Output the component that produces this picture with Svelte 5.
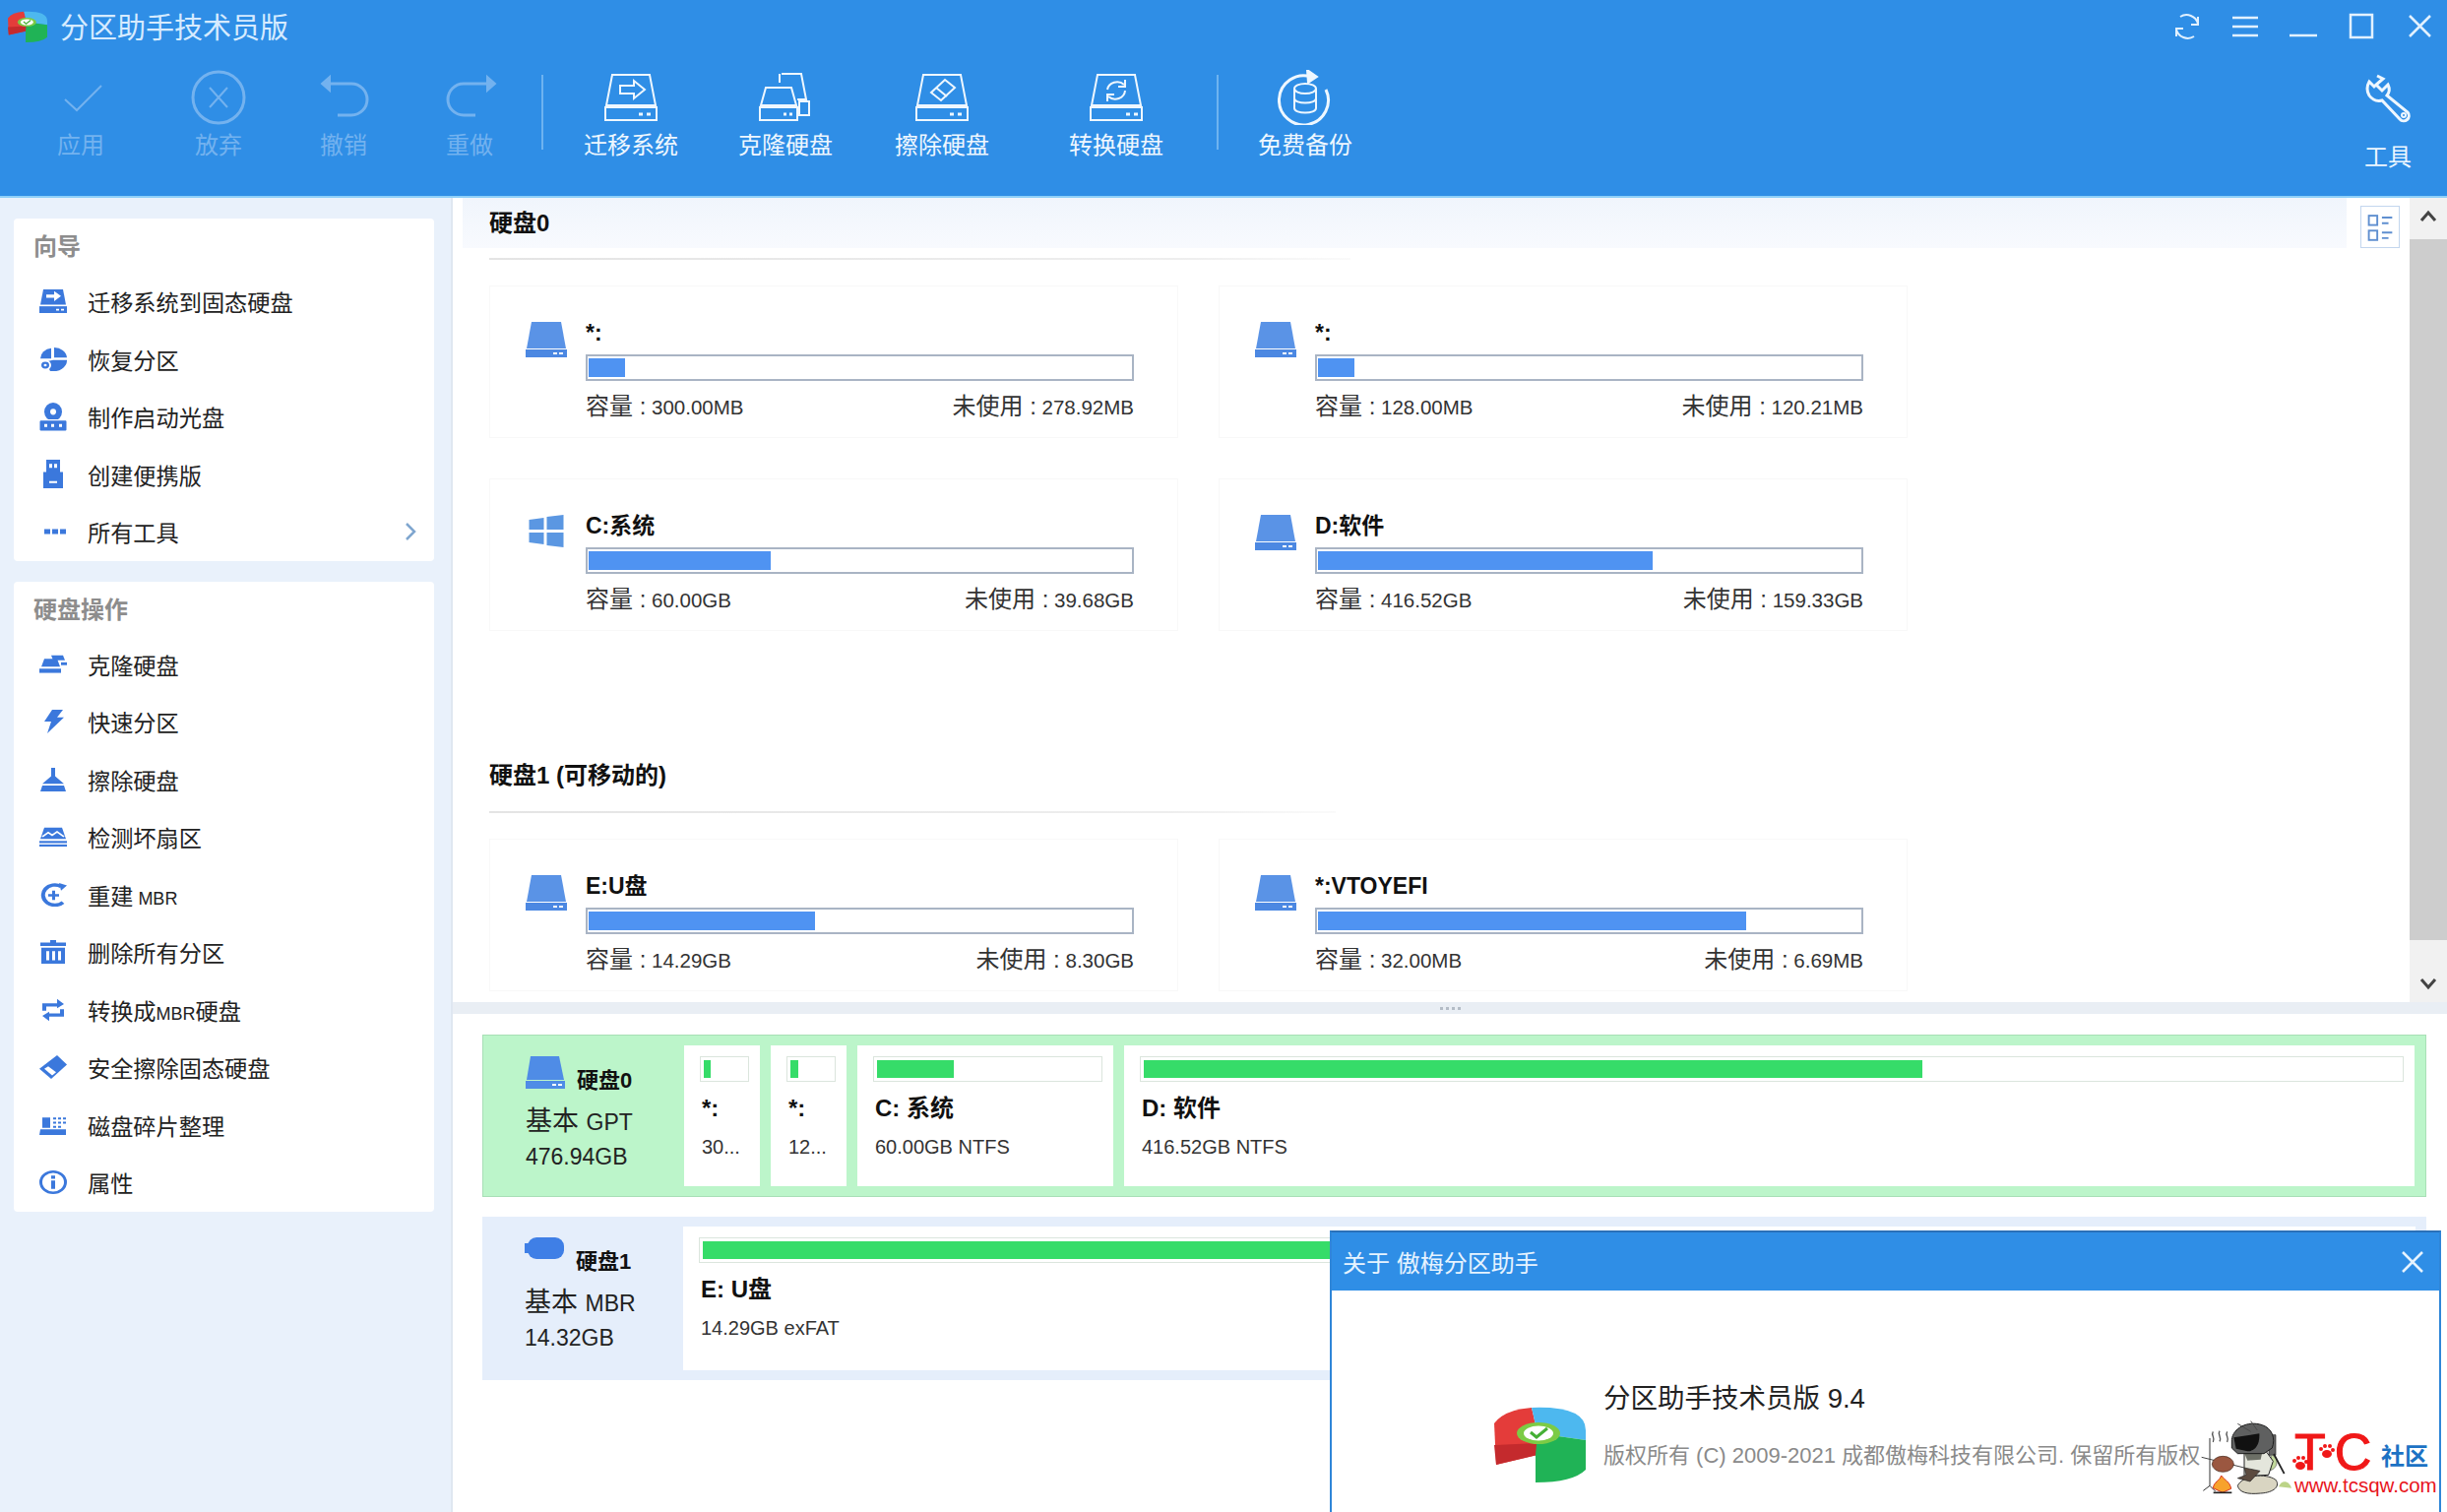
<script>
	const leftTools = [
		{ id: 'check', label: '应用', off: true, gap: 0 },
		{ id: 'cancel', label: '放弃', off: true, gap: 20 },
		{ id: 'undo', label: '撤销', off: true, gap: 7 },
		{ id: 'redo', label: '重做', off: true, gap: 8 },
		{ sep: true, gap: 13 },
		{ id: 'migrate', label: '迁移系统', gap: 29 },
		{ id: 'clone', label: '克隆硬盘', gap: 37 },
		{ id: 'erase', label: '擦除硬盘', gap: 39 },
		{ id: 'convert', label: '转换硬盘', gap: 57 },
		{ sep: true, gap: 42 },
		{ id: 'backup', label: '免费备份', gap: 28 }
	];

	const wizard = [
		{ id: 'migrate', label: '迁移系统到固态硬盘' },
		{ id: 'pie', label: '恢复分区' },
		{ id: 'cd', label: '制作启动光盘', tall: true },
		{ id: 'usb', label: '创建便携版', tall: true },
		{ id: 'dots', label: '所有工具', more: true }
	];

	const diskOps = [
		{ id: 'clone', label: '克隆硬盘', short: true },
		{ id: 'bolt', label: '快速分区' },
		{ id: 'brush', label: '擦除硬盘' },
		{ id: 'scan', label: '检测坏扇区', short: true },
		{ id: 'rebuild', label: '重建 MBR' },
		{ id: 'trash', label: '删除所有分区' },
		{ id: 'swap', label: '转换成MBR硬盘' },
		{ id: 'eraser', label: '安全擦除固态硬盘' },
		{ id: 'defrag', label: '磁盘碎片整理', short: true },
		{ id: 'info', label: '属性' }
	];

	const disk0 = [
		{ name: '*:', size: '300.00MB', free: '278.92MB', used: 6.8 },
		{ name: '*:', size: '128.00MB', free: '120.21MB', used: 6.8 },
		{ name: 'C:系统', size: '60.00GB', free: '39.68GB', used: 33.6, win: true },
		{ name: 'D:软件', size: '416.52GB', free: '159.33GB', used: 61.8 }
	];

	const disk1 = [
		{ name: 'E:U盘', size: '14.29GB', free: '8.30GB', used: 41.9 },
		{ name: '*:VTOYEFI', size: '32.00MB', free: '6.69MB', used: 79 }
	];

	const strip0 = [
		{ name: '*:', sub: '30...', used: 17, w: 77, small: true },
		{ name: '*:', sub: '12...', used: 19, w: 77, small: true },
		{ name: 'C: 系统', sub: '60.00GB NTFS', used: 34.5, w: 260 },
		{ name: 'D: 软件', sub: '416.52GB NTFS', used: 62 }
	];
</script>

{#snippet mixed(text)}
	{#each text.split(/([\x00-\x7f]+)/) as part, i}{#if i % 2}<span class="lat">{part}</span>{:else}{part}{/if}{/each}
{/snippet}

{#snippet toolIcon(id)}
	<svg class="tool-svg" viewBox="0 0 56 56" fill="none" stroke="currentColor" stroke-width="2">
		{#if id === 'check'}
			<polyline points="12,30 24,41 49,16" />
		{:else if id === 'cancel'}
			<circle cx="28" cy="28" r="26" stroke-width="3" />
			<path d="M19 18 37 38M37 18 19 38" />
		{:else if id === 'undo'}
			<path d="M8 14H36A16 16 0 0 1 36 46H22" stroke-width="3" />
			<path d="M6 14 14 7V21Z" fill="currentColor" />
		{:else if id === 'redo'}
			<path d="M50 14H22A16 16 0 0 0 22 46H34" stroke-width="3" />
			<path d="M54 14 46 7V21Z" fill="currentColor" />
		{:else if id === 'migrate'}
			<path d="M9 5H47L53 36H3Z" />
			<rect x="2" y="38" width="52" height="13" />
			<path d="M17 16H31V11L42 20 31 29V24H17Z" />
			<path d="M36 45h4M44 45h4" stroke-width="3" />
		{:else if id === 'clone'}
			<path d="M24 4H44L49 30H40M22 13V4" />
			<path d="M8 18H34L39 36H3Z" />
			<rect x="2" y="38" width="38" height="13" />
			<rect x="42" y="32" width="10" height="14" />
			<path d="M26 45h3M32 45h3" stroke-width="3" />
		{:else if id === 'erase'}
			<path d="M9 5H47L53 36H3Z" />
			<rect x="2" y="38" width="52" height="13" />
			<path d="M31 10 41 18 27 31 17 23Z" />
			<path d="M22 18 33 27" />
			<path d="M36 45h4M44 45h4" stroke-width="3" />
		{:else if id === 'convert'}
			<path d="M9 5H47L53 36H3Z" />
			<rect x="2" y="38" width="52" height="13" />
			<path d="M19 20A10 9 0 0 1 36 15M37 21A10 9 0 0 1 20 27" />
			<path d="M37 10V17H30M19 32V25H26" />
			<path d="M38 45h4M46 45h4" stroke-width="3" />
		{:else if id === 'backup'}
			<path d="M34 7A25 25 0 1 0 49 20" stroke-width="3" />
			<path d="M30 0 40 7 31 13Z" fill="currentColor" />
			<ellipse cx="28" cy="19" rx="11" ry="5" />
			<path d="M17 19V39C17 45 39 45 39 39V19M17 29C17 35 39 35 39 29" />
		{:else if id === 'wrench'}
			<path d="M17 6 23 9 16 15 22 21 28 15Q31 21 27 26L48 43A5 5 0 0 1 40 50L22 31Q14 33 9 26 5 19 9 12L15 18" stroke-width="3" />
			<circle cx="44" cy="46" r="2" />
		{/if}
	</svg>
{/snippet}

{#snippet sideIcon(item)}
	<svg class="side-svg" class:tall={item.tall} class:short={item.short} viewBox="0 0 28 28" preserveAspectRatio="none" fill="#3b78dc">
		{#if item.id === 'migrate'}
			<path d="M4 0H24L27 18H1Z" />
			<rect y="20" width="28" height="8" />
			<path d="M7 6h8V2l7 6-7 6v-4H7Z" fill="#fff" />
			<path d="M17 23h3v2h-3zM22 23h3v2h-3z" fill="#fff" />
		{:else if item.id === 'pie'}
			<path d="M12 1A12 12 0 0 0 1 13H12Z" />
			<path d="M15 0A13 13 0 0 1 28 12H15Z" />
			<path d="M14 15H28A14 13 0 0 1 11 28L6 17Z" />
			<circle cx="6" cy="21" r="5" stroke="#fff" stroke-width="2" />
			<circle cx="6" cy="21" r="1.5" fill="#fff" />
		{:else if item.id === 'cd'}
			<circle cx="14" cy="9" r="9" />
			<circle cx="14" cy="9" r="3" fill="#fff" />
			<rect y="17" width="28" height="11" rx="1.5" stroke="#fff" />
			<path d="M5 21h3v3H5zM12 21h3v3h-3zM20 21h3v3h-3z" fill="#fff" />
		{:else if item.id === 'usb'}
			<path d="M7 0H21V12H24V28H4V12H7Z" />
			<path d="M10 4h3v4h-3zM15 4h3v4h-3zM10 21h8v2h-8z" fill="#fff" />
		{:else if item.id === 'dots'}
			<path d="M5 11h6v6H5zM13 11h6v6h-6zM21 11h6v6h-6z" />
		{:else if item.id === 'clone'}
			<path d="M12 1H24L26 8H14Z" />
			<path d="M5 6H18L21 17H2Z" />
			<rect x="0" y="20" width="22" height="6" />
			<rect x="22" y="11" width="6" height="4" />
		{:else if item.id === 'bolt'}
			<path d="M13 0H24L18 9H25L8 28 12 14H5Z" />
		{:else if item.id === 'brush'}
			<path d="M12 0H16V10L25 19H3L12 10ZM3 21H25L27 28H1Z" />
		{:else if item.id === 'scan'}
			<path d="M5 1H23L27 17H1Z" />
			<path d="M3 14 9 8 13 12 18 7 25 14" fill="none" stroke="#fff" stroke-width="2" />
			<rect y="20" width="28" height="3" />
			<rect y="25" width="28" height="3" />
		{:else if item.id === 'rebuild'}
			<path d="M22 4A12 12 0 1 0 24 23" fill="none" stroke="#3b78dc" stroke-width="4" />
			<path d="M20 0 28 3 22 9Z" />
			<path d="M13 9h3v4h4v3h-4v4h-3v-4H9v-3h4Z" />
		{:else if item.id === 'trash'}
			<path d="M11 0h6v3h10v4H1V3h10Z" />
			<path d="M2 9H26V28H2ZM7 13V24H10V13ZM13 13V24H16V13ZM19 13V24H22V13Z" fill-rule="evenodd" />
		{:else if item.id === 'swap'}
			<path d="M3 15V6H18V1L25 7 18 12V10H7V15Z" />
			<path d="M25 13V22H10V27L3 21 10 16V18H21V13Z" />
		{:else if item.id === 'eraser'}
			<path d="M18 0 28 11 12 28 0 16Z" />
			<path d="M5 16 9 13 17 20 13 24Z" fill="#fff" />
		{:else if item.id === 'defrag'}
			<path d="M3 3H11V18H3ZM1 20H27V28H0Z" />
			<path d="M14 3h3v3h-3zM19 3h3v3h-3zM24 3h3v3h-3zM14 9h3v3h-3zM19 9h3v3h-3zM24 9h3v3h-3zM14 15h3v3h-3zM19 15h3v3h-3z" />
		{:else if item.id === 'info'}
			<ellipse cx="14" cy="14" rx="12.5" ry="12.5" fill="none" stroke="#3b78dc" stroke-width="3" />
			<path d="M12 6h4v4h-4zM12 12h4v10h-4z" />
		{/if}
	</svg>
{/snippet}

{#snippet diskIcon(cls)}
	<svg class={cls} viewBox="0 0 42 36" preserveAspectRatio="none" fill="#5a93e6">
		<path d="M6 0H36L41 27H1Z" />
		<rect y="28" width="42" height="8" fill="#4c88e2" />
		<path d="M28 31h4v2h-4zM34 31h4v2h-4z" fill="#fff" />
	</svg>
{/snippet}

{#snippet logo(cls)}
	<svg class={cls} viewBox="0 0 93 78" preserveAspectRatio="none">
		<path d="M0 18Q10 4 38 2L44 28V50L2 60Z" fill="#e43c3a" />
		<path d="M2 60 44 50V38L0 40Z" fill="#c42a2d" />
		<path d="M38 2Q93 0 93 25V35L44 28Z" fill="#4db8ef" />
		<path d="M44 28 93 35V65Q80 78 42 78V50Z" fill="#20b356" />
		<ellipse cx="45" cy="28" rx="22" ry="11" fill="#7ccb45" />
		<ellipse cx="45" cy="28" rx="15" ry="7.5" fill="#fff" />
		<path d="M37 27 43 32 54 23" fill="none" stroke="#45b035" stroke-width="3" />
	</svg>
{/snippet}

{#snippet volume(v)}
	<div class="volume">
		{#if v.win}
			<svg class="vol-icon win" viewBox="0 0 35 33" fill="#5b97e2">
				<path d="M0 5 15 3V15H0ZM18 2 35 0V15H18ZM0 18H15V30L0 28ZM18 18H35V33L18 31Z" />
			</svg>
		{:else}
			{@render diskIcon('vol-icon')}
		{/if}
		<div class="vol-body">
			<div class="vol-name">{v.name}</div>
			<div class="vol-bar"><div class="vol-fill" style:width="{v.used}%"></div></div>
			<div class="vol-info">
				<span><span class="cap">容量 :</span> {v.size}</span>
				<span><span class="cap">未使用 :</span> {v.free}</span>
			</div>
		</div>
	</div>
{/snippet}

{#snippet paw(x, y)}
	<g transform="translate({x} {y})" fill="#f01818">
		<ellipse cx="0" cy="3" rx="5" ry="4" />
		<circle cx="-6" cy="-2" r="2" />
		<circle cx="-2" cy="-5" r="2" />
		<circle cx="3" cy="-5" r="2" />
		<circle cx="6" cy="-1" r="2" />
	</g>
{/snippet}

<div class="app">
	<header class="header">
		<div class="titlebar">
			{@render logo('app-logo')}
			<span class="app-title">分区助手技术员版</span>
			<div class="win-ctrls">
				<svg viewBox="0 0 30 30" fill="none" stroke="currentColor" stroke-width="2">
					<path d="M8 5A12 12 0 0 1 26 12M22 25A12 12 0 0 1 4 18" />
					<path d="M26 5V13H19M4 25V17H11" />
				</svg>
				<svg viewBox="0 0 30 30" fill="none" stroke="currentColor" stroke-width="2.5"><path d="M2 6H28M2 15H28M2 24H28" /></svg>
				<svg viewBox="0 0 30 30" fill="none" stroke="currentColor" stroke-width="2.5"><path d="M1 24H29" /></svg>
				<svg viewBox="0 0 30 30" fill="none" stroke="currentColor" stroke-width="2.5"><rect x="4" y="3" width="22" height="23" /></svg>
				<svg viewBox="0 0 30 30" fill="none" stroke="currentColor" stroke-width="2.5"><path d="M5 4 26 25M26 4 5 25" /></svg>
			</div>
		</div>
		<div class="toolbar">
			{#each leftTools as t}
				{#if t.sep}
					<div class="tool-sep" style:margin-left="{t.gap}px"></div>
				{:else}
					<div class="tool" class:off={t.off} style:margin-left="{t.gap}px">
						{@render toolIcon(t.id)}
						<span>{t.label}</span>
					</div>
				{/if}
			{/each}
			<div class="tool tool-end">
				{@render toolIcon('wrench')}
				<span>工具</span>
			</div>
		</div>
	</header>

	<div class="body">
		<aside class="sidebar">
			<section class="side-card">
				<h3>向导</h3>
				{#each wizard as item}
					<div class="side-row">
						<span class="side-ico">{@render sideIcon(item)}</span>
						<span class="side-label">{@render mixed(item.label)}</span>
						{#if item.more}
							<svg class="chev" viewBox="0 0 12 20" fill="none" stroke="#7fa6cf" stroke-width="2.5"><path d="M2 2 10 10 2 18" /></svg>
						{/if}
					</div>
				{/each}
			</section>
			<section class="side-card">
				<h3>硬盘操作</h3>
				{#each diskOps as item}
					<div class="side-row">
						<span class="side-ico">{@render sideIcon(item)}</span>
						<span class="side-label">{@render mixed(item.label)}</span>
					</div>
				{/each}
			</section>
		</aside>

		<main class="main">
			<div class="upper">
				<div class="volumes">
					<div class="band-row">
						<div class="band">硬盘0</div>
						<div class="view-btn">
							<svg viewBox="0 0 40 42" fill="none" stroke="#5f8fd0" stroke-width="2">
								<rect x="8" y="9" width="9" height="10" />
								<rect x="8" y="25" width="9" height="10" />
								<path d="M22 11H33M22 17H29M22 27H33M22 33H29" />
							</svg>
						</div>
					</div>
					<div class="rule"></div>
					<div class="vol-grid">
						{#each disk0 as v}
							{@render volume(v)}
						{/each}
					</div>
					<div class="sec-title">硬盘1 (可移动的)</div>
					<div class="rule rule-2"></div>
					<div class="vol-grid">
						{#each disk1 as v}
							{@render volume(v)}
						{/each}
					</div>
				</div>
				<div class="scrollbar">
					<svg class="arrow" viewBox="0 0 20 14" fill="none" stroke="#444" stroke-width="3"><path d="M3 12 10 4 17 12" /></svg>
					<div class="thumb"></div>
					<svg class="arrow" viewBox="0 0 20 14" fill="none" stroke="#444" stroke-width="3"><path d="M3 2 10 10 17 2" /></svg>
				</div>
			</div>

			<div class="splitter"><i></i><i></i><i></i><i></i></div>

			<div class="lower">
				<div class="disk-row selected">
					<div class="disk-info">
						<div class="disk-head">
							<svg class="disk-ico" viewBox="0 0 40 33" preserveAspectRatio="none">
								<path d="M5 0H34L39 24H1Z" fill="#4f8ce6" />
								<rect y="25" width="40" height="8" fill="#4f8ce6" />
								<path d="M27 28h4v2h-4zM33 28h4v2h-4z" fill="#fff" />
							</svg>
							<b>硬盘0</b>
						</div>
						<div class="disk-kind">基本 <span>GPT</span></div>
						<div class="disk-size">476.94GB</div>
					</div>
					{#each strip0 as p}
						<div class="part" class:small={p.small} class:grow={!p.w} style:width={p.w ? `${p.w}px` : null}>
							<div class="part-bar"><div class="part-fill" style:width="{p.used}%"></div></div>
							<div class="part-name">{p.name}</div>
							<div class="part-sub">{p.sub}</div>
						</div>
					{/each}
				</div>
				<div class="disk-row">
					<div class="disk-info">
						<div class="disk-head">
							<svg class="disk-ico usb-ico" viewBox="0 0 40 22" preserveAspectRatio="none">
								<rect x="3" y="0" width="37" height="22" rx="9" fill="#3f7fe6" />
								<rect x="0" y="6" width="5" height="10" fill="#3f7fe6" />
							</svg>
							<b>硬盘1</b>
						</div>
						<div class="disk-kind">基本 <span>MBR</span></div>
						<div class="disk-size">14.32GB</div>
					</div>
					<div class="part grow">
						<div class="part-bar"><div class="part-fill" style:width="100%"></div></div>
						<div class="part-name">E: U盘</div>
						<div class="part-sub">14.29GB exFAT</div>
					</div>
				</div>
			</div>
		</main>
	</div>

	<div class="dialog">
		<div class="dlg-title">
			<span>关于 傲梅分区助手</span>
			<svg viewBox="0 0 24 24" fill="none" stroke="#e6f3ff" stroke-width="2.5"><path d="M2 2 22 22M22 2 2 22" /></svg>
		</div>
		<div class="dlg-body">
			{@render logo('dlg-logo')}
			<div class="dlg-text">
				<div class="dlg-name">分区助手技术员版 9.4</div>
				<div class="dlg-copy">版权所有 (C) 2009-2021 成都傲梅科技有限公司. 保留所有版权</div>
			</div>
		</div>
	</div>

	<div class="watermark">
		<svg class="mascot" viewBox="0 0 300 240">
			<path d="M55 40c-8 12 8 18 0 32M75 38c-8 12 8 18 0 32M98 40c-8 12 8 18 0 32" fill="none" stroke="#555" stroke-width="4" />
			<path d="M45 60V205M45 205 25 220M45 205 62 222" fill="none" stroke="#333" stroke-width="3" />
			<path d="M225 50H246V112H225Z" fill="#666" stroke="#222" stroke-width="2" />
			<path d="M232 110C256 120 254 150 230 158Z" fill="#c2d99c" stroke="#555" stroke-width="2" />
			<path d="M240 108 272 168" stroke="#222" stroke-width="5" />
			<path d="M150 102 215 98 238 130 224 172 150 176Z" fill="#e4e6dc" stroke="#222" stroke-width="3" />
			<path d="M150 105 205 102 200 125 160 128Z" fill="#6c6f66" />
			<path d="M112 65C115 30 160 5 205 20 235 30 246 60 235 90L210 107H130L112 90Z" fill="#5f6060" stroke="#1c1c1c" stroke-width="3" />
			<path d="M118 58 196 46C198 82 182 100 160 100L125 92Z" fill="#111" />
			<path d="M130 16 170 40 M170 8 190 36" stroke="#4a4a4a" stroke-width="3" />
			<path d="M130 205C145 172 215 166 245 186 262 206 240 226 200 228 160 232 135 226 130 205Z" fill="#d9d5c2" stroke="#333" stroke-width="3" />
			<path d="M150 150 198 160 168 192 130 182 156 172Z" fill="#5c4b3f" stroke="#222" stroke-width="2" />
			<path d="M255 208C262 188 285 186 294 212Z" fill="#bcd488" />
			<path d="M20 118 150 150" stroke="#444" stroke-width="3" />
			<ellipse cx="85" cy="139" rx="33" ry="24" fill="#9b5740" stroke="#3c1f14" stroke-width="2" />
			<path d="M55 212C58 192 74 192 80 174 92 190 106 192 110 214L84 226Z" fill="#f7a22c" stroke="#d8301c" stroke-width="3" />
			<path d="M56 226H112" stroke="#222" stroke-width="5" />
		</svg>
		<div class="wm-text">
			<div class="wm-top">
				<span class="wm-tc">TC</span>
				<span class="wm-cn">社区</span>
			</div>
			<div class="wm-url">www.tcsqw.com</div>
		</div>
		<svg class="paws" viewBox="0 0 256 100">
			{@render paw(107, 45)}
			{@render paw(134, 33)}
		</svg>
	</div>
</div>

<style>
	:global(body) {
		margin: 0;
		background: #fff;
	}

	.app {
		position: relative;
		width: 2486px;
		height: 1536px;
		overflow: hidden;
		display: flex;
		flex-direction: column;
		font-family: "Liberation Sans", "Noto Sans CJK SC", sans-serif;
		color: #222;
	}

	/* header */
	.header {
		height: 199px;
		flex: none;
		background: #2f8ee6;
		border-bottom: 2px solid #8fd0f8;
		color: #eaf5ff;
	}

	.titlebar {
		height: 54px;
		display: flex;
		align-items: center;
		padding-left: 8px;
		padding-right: 13px;
	}

	:global(.app-logo) {
		width: 40px;
		height: 32px;
	}

	.app-title {
		margin-left: 13px;
		margin-top: -2px;
		font-size: 29px;
		color: #d6ebff;
	}

	.win-ctrls {
		margin-left: auto;
		display: flex;
		gap: 29px;
		color: #e2f1ff;
	}

	.win-ctrls svg {
		width: 30px;
		height: 30px;
	}

	.toolbar {
		display: flex;
		padding: 17px 0 0 22px;
	}

	.tool {
		width: 120px;
		display: flex;
		flex-direction: column;
		align-items: center;
		color: #eef7ff;
	}

	.tool span {
		font-size: 24px;
		line-height: 30px;
		margin-top: 6px;
	}

	.tool.off {
		color: #73b2ef;
	}

	.tool-end {
		margin-left: auto;
	}

	.tool-end span {
		margin-top: 18px;
	}

	:global(.tool-svg) {
		width: 56px;
		height: 56px;
		flex: none;
	}

	.tool-sep {
		width: 2px;
		height: 76px;
		margin-top: 5px;
		background: #6eb3f0;
	}

	/* sidebar */
	.body {
		flex: 1;
		display: flex;
		min-height: 0;
	}

	.sidebar {
		width: 427px;
		flex: none;
		padding: 21px 17px 0 14px;
		background: #e9f1fb;
		display: flex;
		flex-direction: column;
		gap: 21px;
	}

	.side-card {
		background: #fff;
		border-radius: 4px;
	}

	.side-card h3 {
		margin: 0;
		height: 55px;
		padding: 0 0 2px 20px;
		box-sizing: border-box;
		display: flex;
		align-items: center;
		font-size: 24px;
		font-weight: 700;
		color: #8d8d8d;
	}

	.side-row {
		height: 58.5px;
		display: flex;
		align-items: center;
		padding-left: 26px;
		padding-right: 16px;
	}

	.side-ico {
		width: 28px;
		height: 29px;
		flex: none;
		display: flex;
		align-items: center;
	}

	:global(.side-svg) {
		width: 28px;
		height: 24px;
		flex: none;
	}

	:global(.side-svg.tall) {
		height: 29px;
	}

	:global(.side-svg.short) {
		height: 20px;
	}

	.side-label {
		margin-left: 21px;
		font-size: 23.2px;
		color: #222;
		--lat: 18px;
	}

	.chev {
		margin-left: auto;
		margin-right: 2px;
		width: 12px;
		height: 20px;
	}

	.lat {
		font-size: var(--lat, 0.88em);
	}

	/* main */
	.main {
		flex: 1;
		min-width: 0;
		display: flex;
		flex-direction: column;
		border-left: 2px solid #dfe7f1;
	}

	.upper {
		height: 817px;
		flex: none;
		display: flex;
	}

	.volumes {
		flex: 1;
		min-width: 0;
		overflow: hidden;
	}

	.band-row {
		display: flex;
		margin-left: 10px;
	}

	.band {
		flex: 1;
		height: 51px;
		padding: 0 0 5px 27px;
		box-sizing: border-box;
		display: flex;
		align-items: center;
		font-size: 24px;
		font-weight: 700;
		color: #111;
		background: linear-gradient(180deg, #f0f5fc, #f8fafe);
	}

	.view-btn {
		width: 38px;
		height: 41px;
		margin: 8px 10px 0 14px;
		border: 1px solid #c3d6ee;
		background: #fff;
	}

	.view-btn svg {
		width: 100%;
		height: 100%;
		display: block;
	}

	.rule {
		height: 2px;
		width: 875px;
		margin: 10px 0 0 37px;
		background: linear-gradient(90deg, #e4e4e4, #eeeeee 80%, #fafafa);
	}

	.rule-2 {
		margin-top: 13px;
		width: 860px;
	}

	.vol-grid {
		display: grid;
		grid-template-columns: 700px 700px;
		gap: 41px;
		margin: 26px 0 0 37px;
	}

	.sec-title {
		margin: 118px 0 0 37px;
		height: 52px;
		display: flex;
		align-items: center;
		font-size: 24px;
		font-weight: 700;
		color: #111;
	}

	.volume {
		height: 155px;
		box-sizing: border-box;
		border: 1px solid #f8f8f8;
		padding: 32px 44px 0 36px;
		display: flex;
	}

	:global(.vol-icon) {
		width: 42px;
		height: 36px;
		flex: none;
		margin-top: 4px;
	}

	:global(.vol-icon.win) {
		height: 33px;
		width: 36px;
		margin: 4px 3px 0 3px;
	}

	.vol-body {
		margin-left: 19px;
		flex: 1;
		min-width: 0;
	}

	.vol-name {
		height: 30px;
		line-height: 30px;
		font-size: 23px;
		font-weight: 700;
		color: #111;
	}

	.vol-bar {
		height: 27px;
		margin-top: 7px;
		box-sizing: border-box;
		border: 2px solid #a9b4c4;
		padding: 2px 2px 2px 1px;
		background: #fff;
	}

	.vol-fill {
		height: 100%;
		background: #4f93f2;
	}

	.vol-info {
		margin-top: 10px;
		height: 26px;
		display: flex;
		justify-content: space-between;
		align-items: center;
		font-size: 20.5px;
		color: #333;
	}

	.cap {
		font-size: 24px;
	}

	/* scrollbar */
	.scrollbar {
		width: 38px;
		flex: none;
		background: #f1f1f1;
		display: flex;
		flex-direction: column;
		align-items: center;
	}

	.arrow {
		width: 20px;
		height: 14px;
		flex: none;
		margin: 11px 0 17px;
	}

	.thumb {
		width: 100%;
		height: 712px;
		flex: none;
		background: #cdcdcd;
	}

	.thumb + .arrow {
		margin: 38px 0 0;
	}

	.splitter {
		height: 12px;
		flex: none;
		background: #e9eef4;
		display: flex;
		justify-content: center;
		align-items: center;
		gap: 3px;
	}

	.splitter i {
		width: 3px;
		height: 3px;
		background: #b4bcc6;
	}

	/* bottom strip */
	.lower {
		flex: 1;
		padding: 21px 21px 0 30px;
		display: flex;
		flex-direction: column;
		gap: 20px;
	}

	.disk-row {
		height: 166px;
		box-sizing: border-box;
		display: flex;
		gap: 11px;
		padding: 10px 11px 10px 0;
		background: #e5eefb;
	}

	.disk-row.selected {
		height: 165px;
		background: #bcf5ca;
		border: 1px solid #a8dfb6;
	}

	.disk-info {
		width: 204px;
		flex: none;
		margin-right: -11px;
		padding: 12px 0 0 43px;
		box-sizing: border-box;
	}

	.disk-head {
		height: 34px;
		display: flex;
		align-items: flex-end;
	}

	:global(.disk-ico) {
		width: 40px;
		height: 33px;
		flex: none;
		margin-bottom: 2px;
	}

	:global(.usb-ico) {
		height: 22px;
		margin-bottom: 13px;
	}

	.disk-head b {
		margin-left: 12px;
		margin-bottom: -4px;
		font-size: 22px;
		line-height: 28px;
		color: #111;
	}

	.disk-kind {
		margin-top: 13px;
		height: 36px;
		line-height: 36px;
		font-size: 27px;
		color: #222;
	}

	.disk-kind span {
		font-size: 23px;
	}

	.disk-size {
		height: 37px;
		line-height: 37px;
		font-size: 23px;
		color: #222;
	}

	.part {
		flex: none;
		box-sizing: border-box;
		background: #fff;
		padding: 11px 11px 0 16px;
		overflow: hidden;
	}

	.part.grow {
		flex: 1;
		min-width: 0;
	}

	.part-bar {
		height: 26px;
		box-sizing: border-box;
		border: 1px solid #dbe5dd;
		padding: 3px;
		background: #fff;
	}

	.part-fill {
		height: 100%;
		background: #36dc69;
	}

	.part-name {
		margin-top: 9px;
		padding-left: 2px;
		height: 36px;
		line-height: 36px;
		font-size: 24px;
		font-weight: 700;
		color: #111;
	}

	.part-sub {
		margin-top: 7px;
		padding-left: 2px;
		height: 28px;
		line-height: 28px;
		font-size: 20px;
		color: #333;
		white-space: nowrap;
	}

	/* about dialog */
	.dialog {
		position: absolute;
		left: 1351px;
		top: 1250px;
		width: 1129px;
		height: 300px;
		box-sizing: border-box;
		background: #fff;
		border: 2px solid #2f86d8;
		border-top-color: #2a70b8;
	}

	.dlg-title {
		height: 59px;
		background: #2f8ee6;
		display: flex;
		align-items: center;
		justify-content: space-between;
		padding: 0 15px 0 11px;
		font-size: 24px;
		color: #e6f3ff;
	}

	.dlg-title svg {
		width: 24px;
		height: 24px;
	}

	.dlg-body {
		display: flex;
		padding: 91px 0 0 165px;
	}

	:global(.dlg-logo) {
		width: 93px;
		height: 78px;
		margin-top: 26px;
		flex: none;
	}

	.dlg-text {
		margin-left: 18px;
		margin-top: 2px;
		white-space: nowrap;
	}

	.dlg-name {
		font-size: 27.5px;
		line-height: 34px;
		color: #222;
	}

	.dlg-copy {
		margin-top: 26px;
		font-size: 22px;
		line-height: 30px;
		color: #8a8a8a;
	}

	/* site watermark sits on top of everything */
	.watermark {
		position: absolute;
		left: 2230px;
		top: 1441px;
		width: 256px;
		height: 95px;
		display: flex;
	}

	.mascot {
		width: 100px;
		height: 80px;
		flex: none;
	}

	.paws {
		position: absolute;
		inset: 0;
		width: 256px;
		height: 100px;
	}

	.wm-text {
		margin-left: 1px;
		margin-top: 11px;
	}

	.wm-top {
		display: flex;
		align-items: flex-start;
		height: 46px;
	}

	.wm-tc {
		width: 88px;
		font-size: 52px;
		line-height: 46px;
		letter-spacing: 9px;
		color: #f01818;
		-webkit-text-stroke: 1px #f01818;
	}

	.wm-cn {
		margin-top: 16px;
		font-size: 24px;
		line-height: 24px;
		font-weight: 700;
		color: #1c72c4;
	}

	.wm-url {
		font-size: 20.5px;
		line-height: 21px;
		color: #e8141c;
		white-space: nowrap;
	}
</style>
